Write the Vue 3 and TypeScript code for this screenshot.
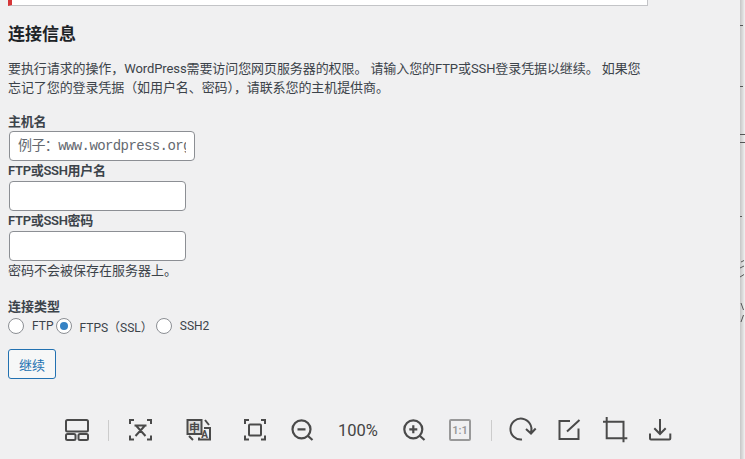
<script setup lang="ts">
const fields = [
  { id: 'hostname', label: '主机名', type: 'text', wide: true, placeholder: '例子：www.wordpress.org' },
  { id: 'username', label: 'FTP或SSH用户名', type: 'text', wide: false, placeholder: '' },
  { id: 'password', label: 'FTP或SSH密码', type: 'password', wide: false, placeholder: '' },
]
const types = [
  { value: 'ftp', label: 'FTP', checked: false },
  { value: 'ftps', label: 'FTPS（SSL）', checked: true },
  { value: 'ssh2', label: 'SSH2', checked: false },
]
</script>

<template>
  <div class="page">
    <div class="main">
      <div class="notice"></div>
      <h2 class="title">连接信息</h2>
      <p class="intro">要执行请求的操作，WordPress需要访问您网页服务器的权限。 请输入您的FTP或SSH登录凭据以继续。 如果您忘记了您的登录凭据（如用户名、密码），请联系您的主机提供商。</p>

      <div class="fields">
        <label v-for="f in fields" :key="f.id" class="field">
          <span class="field-label">{{ f.label }}</span>
          <input class="input" :class="{ wide: f.wide }" :type="f.type" :placeholder="f.placeholder" />
        </label>
      </div>
      <p class="hint">密码不会被保存在服务器上。</p>

      <div class="type-title">连接类型</div>
      <div class="types">
        <label v-for="t in types" :key="t.value" class="type">
          <span class="radio" :class="{ on: t.checked }"></span>{{ t.label }}
        </label>
      </div>
      <button class="submit" type="button">继续</button>

      <div class="toolbar">
        <svg class="ic" viewBox="63 416 28 28"><rect x="66" y="420" width="22" height="11.5" rx="1.5" /><rect x="66" y="434" width="9.5" height="6" rx="1.5" /><rect x="78.5" y="434" width="9.5" height="6" rx="1.500" /></svg>
        <span class="sep"></span>
        <svg class="ic" viewBox="126 416 28 28"><path d="M134 420h-4v4M147 420h4v4M134 439.500h-4v-4M147 439.500h4v-4M134.500 425.500h12M136 425.500l9.500 10.500M145 425.500l-9.500 10.500" /></svg>
        <svg class="ic" viewBox="184 416 28 28">
          <rect x="187.500" y="420" width="14" height="14" fill="#dedede" />
          <text x="194.500" y="431.500" class="glyph" text-anchor="middle">申</text>
          <path d="M205 420l4 5M204 428h6v11.500h-11v-2M189 436l4 4" />
          <text x="204.500" y="438" class="glyph-a" text-anchor="middle">A</text>
        </svg>
        <svg class="ic" viewBox="242 416 28 28"><path d="M250 420h-4v4M262 420h4v4M250 439.500h-4v-4M262 439.500h4v-4" /><rect x="250" y="424.500" width="12" height="11" rx="1" /></svg>
        <svg class="ic thick" viewBox="288 416 28 28"><circle cx="301.500" cy="429.300" r="9" /><path d="M297.500 429.300h8M308 436l4.500 4" /></svg>
        <span class="zoom">100%</span>
        <svg class="ic thick" viewBox="400 416 28 28"><circle cx="413.300" cy="429.300" r="9" /><path d="M409.300 429.300h8M413.300 425.300v8M420 436l4.500 4" /></svg>
        <svg class="ic muted" viewBox="445 416 28 28"><rect x="450" y="420" width="20" height="20" rx="1" /><text x="460" y="434" class="one" text-anchor="middle">1:1</text></svg>
        <span class="sep"></span>
        <svg class="ic" viewBox="508 416 28 28"><path d="M522 439.500A10.500 10.500 0 1 1 531 432M526 429l5 4.500 4.700-5" /></svg>
        <svg class="ic" viewBox="555 416 28 28"><path d="M570 421h-10.500v18h19v-10.500M567 431.500l12.500-11.500" /></svg>
        <svg class="ic" viewBox="602 416 28 28"><path d="M603 421.700h20.500v20.500M606.700 417v21.300h20.600" /></svg>
        <svg class="ic" viewBox="646 416 28 28"><path d="M660 419v14.500M654.300 428.300l5.700 5.700 5.700-5.700M650 433.500v5a1 1 0 0 0 1 1h18.300a1 1 0 0 0 1-1v-5" /></svg>
      </div>
    </div>
    <div class="edge">
      <svg class="edge-marks" viewBox="740 0 5 459">
        <path d="M740 25.500h3M740 86.500h3M740 134.500h5M740 142.500h5M740 216.500h2M741 262l3-1.500M740 268l4-2M740 277l4-2.500M741 303l2.500 7M741 322l2.500-7" />
      </svg>
    </div>
  </div>
</template>

<style>
html, body { margin: 0; background: #f0f0f1; }
</style>

<style scoped>
.page {
  display: flex;
  width: 745px;
  height: 459px;
  overflow: hidden;
  background: #f0f0f1;
  color: #3c434a;
  font-family: Roboto, "Noto Sans CJK SC", sans-serif;
  font-size: 13px;
}
.main { width: 740px; flex: none; padding-left: 8px; box-sizing: border-box; }
.edge { flex: 1; background: linear-gradient(90deg, #c6c6c6, #dedede 60%, #f2f2f2); }
.edge-marks { display: block; width: 5px; height: 459px; fill: none; stroke: #555; stroke-width: 1; }
.notice {
  width: 640px;
  height: 6px;
  box-sizing: border-box;
  background: #fff;
  border-left: 4px solid #d63638;
  border-right: 1px solid #c3c4c7;
  border-bottom: 1px solid #c3c4c7;
}
.title { margin: 16px 0 0; font-size: 17px; line-height: 24px; font-weight: 700; color: #1d2327; }
.intro { margin: 13px 0 0; width: 640px; line-height: 19px; letter-spacing: -0.09px; }
.fields { margin-top: 17px; display: flex; flex-direction: column; }
.field { display: flex; flex-direction: column; align-items: flex-start; margin-top: 2px; }
.field:first-child { margin-top: 0; }
.field-label { font-weight: 600; line-height: 16px; height: 18px; letter-spacing: -0.3px; }
.field:first-child .field-label { height: 17px; }
.input {
  margin: 0 0 0 1px;
  width: 177px;
  height: 30px;
  box-sizing: border-box;
  padding: 0 8px;
  background: #fff;
  border: 1px solid #8c8f94;
  border-radius: 4px;
  font-family: "Liberation Mono", "Noto Sans CJK SC", monospace;
  font-size: 14px;
  letter-spacing: -0.6px;
  color: #2c3338;
}
.input.wide { width: 186px; }
.input::placeholder { color: #646970; opacity: 1; }
.hint { margin: 0; line-height: 19px; }
.type-title { margin-top: 17px; font-weight: 600; line-height: 19px; }
.types { display: flex; height: 20px; align-items: center; font-size: 12px; }
.type { display: flex; align-items: center; margin-right: 3px; }
.radio {
  width: 16px;
  height: 16px;
  box-sizing: border-box;
  margin-right: 8px;
  border: 1px solid #8c8f94;
  border-radius: 50%;
  background: #fff;
  display: flex;
  align-items: center;
  justify-content: center;
}
.radio.on { margin-right: 7px; }
.radio.on::before { content: ""; width: 8px; height: 8px; border-radius: 50%; background: #3582c4; }
.submit {
  display: block;
  margin: 13px 0 0;
  width: 48px;
  height: 30px;
  padding: 0;
  background: #f6f7f7;
  color: #2271b1;
  border: 1px solid #2271b1;
  border-radius: 3px;
  font: inherit;
}
.toolbar {
  display: grid;
  grid-template-columns: 34px 28px 36px 80px 34px 60px 52px 60px 30px 34px 28px 66px 28px 60px;
  justify-items: center;
  align-items: center;
  height: 28px;
  margin: 37px 0 0 52px;
  width: 630px;
}
.ic { width: 28px; height: 28px; overflow: visible; fill: none; stroke: #4a4a4a; stroke-width: 2; }
.ic.thick { stroke-width: 2.2; }
.ic.muted { stroke: #999; }
.glyph { font: 700 11px "Noto Sans CJK SC", sans-serif; fill: #4a4a4a; stroke: none; }
.glyph-a { font: 700 10px Roboto, sans-serif; fill: #4a4a4a; stroke: none; }
.one { font: 600 11px Roboto, sans-serif; fill: #999; stroke: none; }
.sep { width: 1px; height: 21px; background: #ccc; }
.zoom { font-size: 16.5px; color: #444; }
</style>
